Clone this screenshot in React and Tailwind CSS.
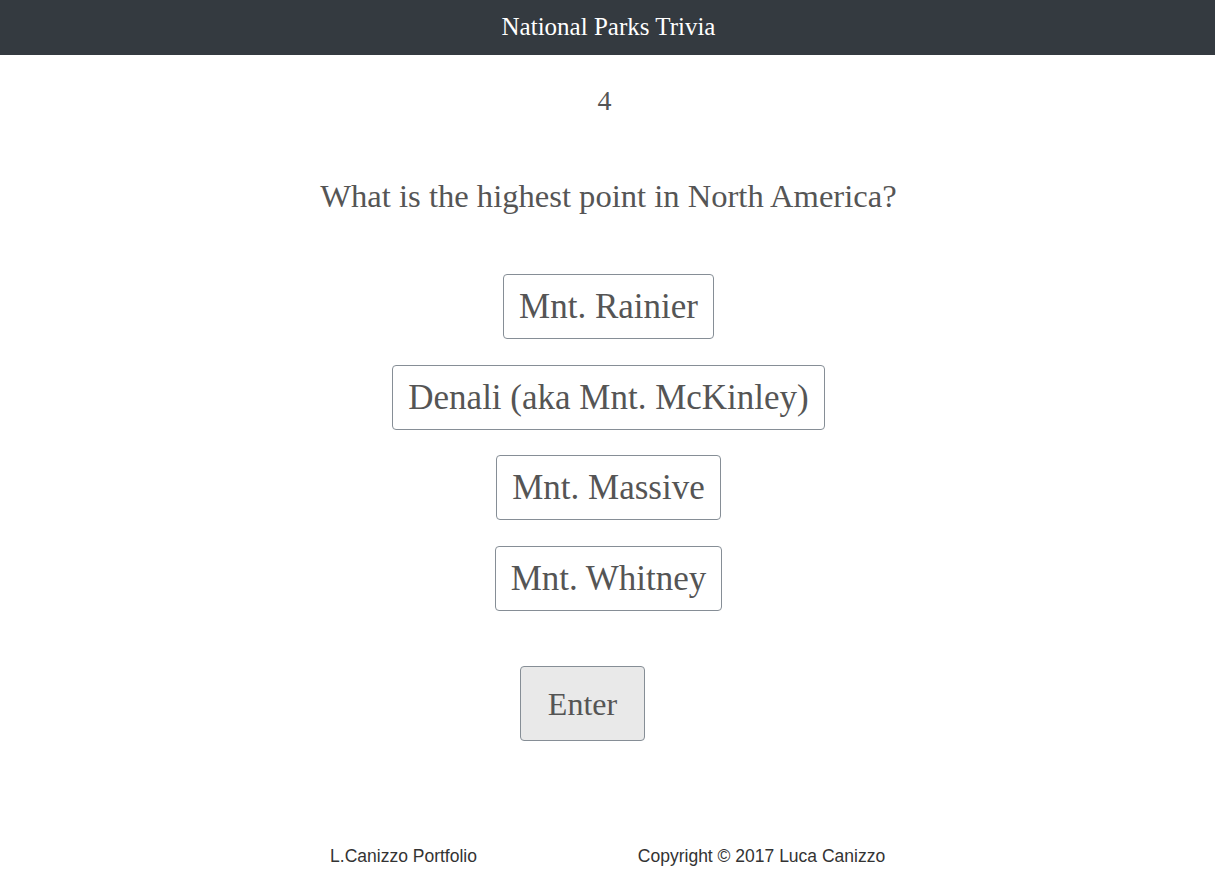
export default function App() {
  const serif = { fontFamily: '"Liberation Serif", "Times New Roman", serif' };
  const options = ["Mnt. Rainier", "Denali (aka Mnt. McKinley)", "Mnt. Massive", "Mnt. Whitney"];
  return (
    <div className="min-h-[881px] bg-white" style={serif}>
      <header className="h-[55px] bg-[#343a40] flex items-center justify-center">
        <h1 className="text-[25px] leading-none text-white pb-[3px] ml-[2px]">National Parks Trivia</h1>
      </header>
      <div className="flex flex-col items-center text-[#555555]">
        <div className="mt-[25px] mr-[6px] text-[28px] leading-[42px]">4</div>
        <div className="mt-[50px] ml-[2px] text-[32.6px] leading-[48px]">What is the highest point in North America?</div>
        <div className="mt-[54px] ml-[2px] flex flex-col items-center">
          {options.map((o, i) => (
            <button
              key={o}
              className={`h-[65px] px-[15px] border border-[#868e96] rounded-[4px] bg-white text-[35px] leading-none text-[#555555] ${i === 0 ? "" : i === 2 ? "mt-[25px]" : "mt-[26px]"}`}
              style={serif}
            >
              {o}
            </button>
          ))}
        </div>
        <div className="mt-[55px] mr-[50px]">
          <button
            className="h-[75px] w-[125px] border border-[#868e96] rounded-[4px] bg-[#e9e9e9] text-[32px] leading-none text-[#555555]"
            style={serif}
          >
            Enter
          </button>
        </div>
        <footer
          className="mt-[103px] mr-[50px] w-[716px] grid grid-cols-2 text-[17.5px] leading-[24px] text-[#333333]"
          style={{ fontFamily: '"Liberation Sans", Arial, sans-serif' }}
        >
          <div className="text-center">L.Canizzo Portfolio</div>
          <div className="text-center">Copyright © 2017 Luca Canizzo</div>
        </footer>
      </div>
    </div>
  );
}
